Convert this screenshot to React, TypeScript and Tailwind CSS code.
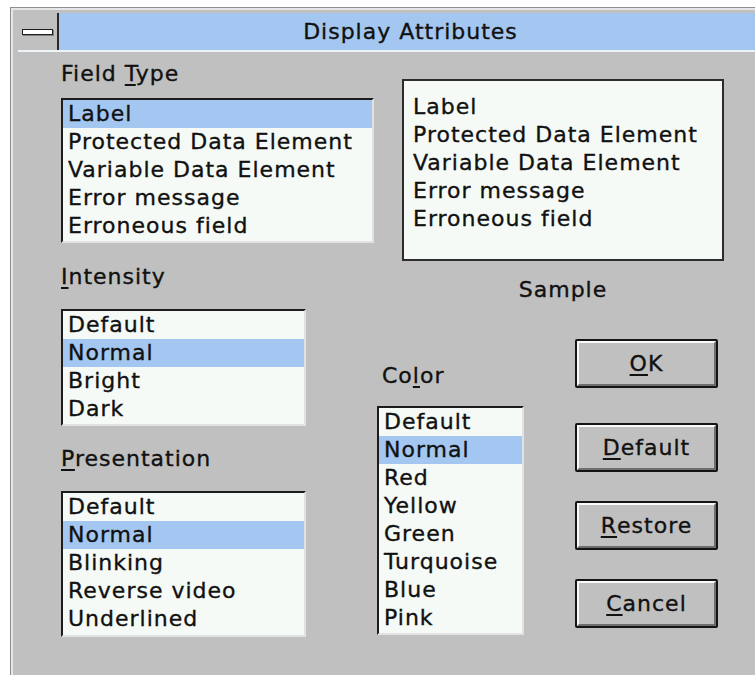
import React from 'react';

const font = { fontFamily: '"DejaVu Sans", "Liberation Sans", sans-serif' };

function Mn({ children }: { children: React.ReactNode }) {
  return <span className="underline decoration-2 underline-offset-[3px]">{children}</span>;
}

function ListBox({ items, selected, className }: { items: string[]; selected: number; className: string }) {
  return (
    <div
      className={`border-2 border-t-[#1c1c1c] border-l-[#1c1c1c] border-b-[#e2e2e2] border-r-[#e2e2e2] bg-[#f5faf6] ${className}`}
    >
      {items.map((item, i) => (
        <div key={item} className={`h-[28px] pl-[5px] leading-[28px] ${i === selected ? 'bg-[#a3c7f0]' : ''}`}>
          {item}
        </div>
      ))}
    </div>
  );
}

function Button({ children, className = '' }: { children: React.ReactNode; className?: string }) {
  return (
    <div className={`h-[49px] w-[143px] rounded-[2px] border-2 border-[#141414] ${className}`}>
      <div className="flex h-full w-full items-center justify-center border-2 border-t-[#fafafa] border-l-[#fafafa] border-b-[#6e6e6e] border-r-[#6e6e6e] bg-[#c0c0c0]">
        {children}
      </div>
    </div>
  );
}

export default function App() {
  return (
    <div
      className="h-[675px] w-[755px] overflow-hidden bg-white text-[22px] tracking-[1px] text-[#111] [-webkit-text-stroke:0.35px_#111]"
      style={font}
    >
      <div className="ml-[10px] mt-[7px] h-[700px] w-[752px] border-l border-t border-[#8e8e8e]">
        <div className="h-full w-full border-l-2 border-t-2 border-[#e6e6e6] bg-[#c0c0c0]">
          {/* title bar */}
          <div className="ml-[5px] mt-[3px] flex h-[39px] border-b-2 border-[#eef3f8]">
            <div className="flex w-[41px] items-center justify-center border-r-2 border-[#2a2a2a] bg-[#c0c0c0]">
              <div className="h-[6px] w-[31px] border border-[#1e1e1e] bg-white shadow-[1px_1px_0_#808080]" />
            </div>
            <div className="flex flex-1 items-center justify-center bg-[#a3c7f0]">Display Attributes</div>
          </div>

          {/* body */}
          <div className="flex">
            <div className="ml-[48px] flex w-[313px] flex-col">
              <div className="mt-[10px] h-[24px] leading-[24px]">
                Field <Mn>T</Mn>ype
              </div>
              <ListBox
                className="mt-[12px] h-[145px] w-[313px]"
                selected={0}
                items={['Label', 'Protected Data Element', 'Variable Data Element', 'Error message', 'Erroneous field']}
              />
              <div className="mt-[22px] h-[24px] leading-[24px]">
                <Mn>I</Mn>ntensity
              </div>
              <ListBox
                className="mt-[20px] h-[117px] w-[245px]"
                selected={1}
                items={['Default', 'Normal', 'Bright', 'Dark']}
              />
              <div className="mt-[21px] h-[24px] leading-[24px]">
                <Mn>P</Mn>resentation
              </div>
              <ListBox
                className="mt-[20px] h-[146px] w-[245px]"
                selected={1}
                items={['Default', 'Normal', 'Blinking', 'Reverse video', 'Underlined']}
              />
            </div>

            <div className="flex flex-col">
              <div className="ml-[28px] mt-[27px] w-[322px]">
                <div className="h-[182px] border-2 border-[#2c2c2c] bg-[#f5faf6] pl-[9px] pt-[12px]">
                  {['Label', 'Protected Data Element', 'Variable Data Element', 'Error message', 'Erroneous field'].map(
                    (t) => (
                      <div key={t} className="h-[28px] leading-[28px]">
                        {t}
                      </div>
                    ),
                  )}
                </div>
                <div className="mt-[17px] h-[24px] text-center leading-[24px]">Sample</div>
              </div>

              <div className="mt-[37px] flex">
                <div className="ml-[3px] flex flex-col">
                  <div className="mt-[25px] h-[24px] pl-[5px] leading-[24px]">
                    Co<Mn>l</Mn>or
                  </div>
                  <ListBox
                    className="mt-[18px] h-[229px] w-[147px]"
                    selected={1}
                    items={['Default', 'Normal', 'Red', 'Yellow', 'Green', 'Turquoise', 'Blue', 'Pink']}
                  />
                </div>
                <div className="ml-[51px] flex flex-col">
                  <Button>
                    <Mn>O</Mn>K
                  </Button>
                  <Button className="mt-[35px]">
                    <Mn>D</Mn>efault
                  </Button>
                  <Button className="mt-[29px]">
                    <Mn>R</Mn>estore
                  </Button>
                  <Button className="mt-[29px]">
                    <Mn>C</Mn>ancel
                  </Button>
                </div>
              </div>
            </div>
          </div>
        </div>
      </div>
    </div>
  );
}
